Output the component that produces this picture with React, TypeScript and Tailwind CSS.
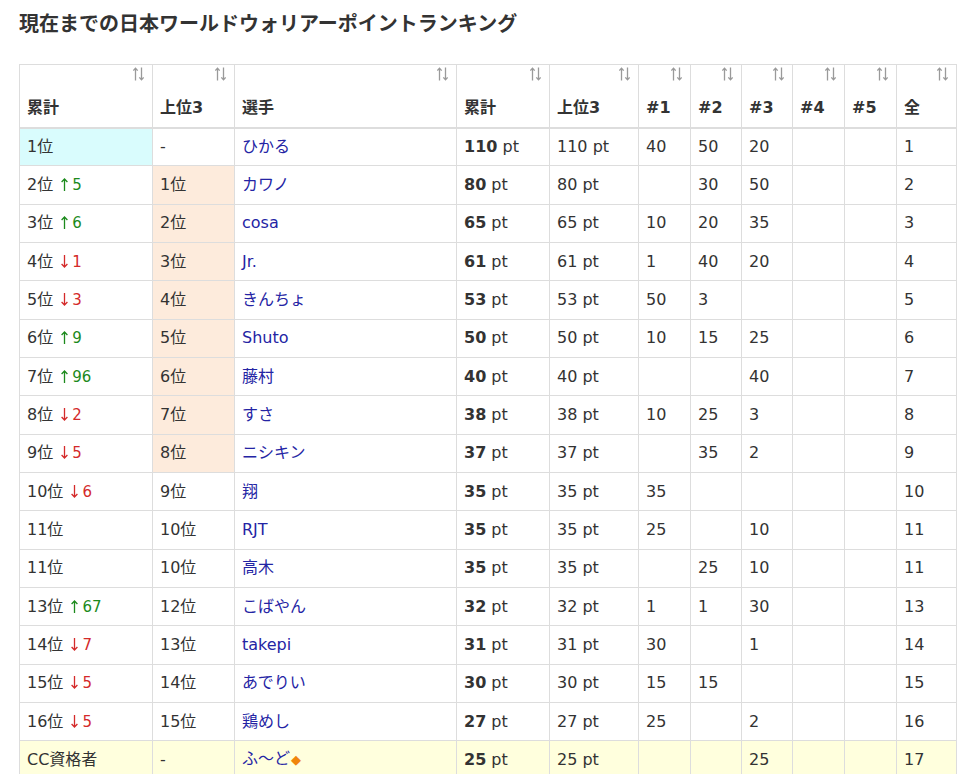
import React from 'react';

type Move = { dir: 'up' | 'down'; n: number } | null;

interface Row {
  total: string;
  move: Move;
  top3: string;
  name: string;
  pts: number;
  top3pts: number;
  r1?: number;
  r2?: number;
  r3?: number;
  r4?: number;
  r5?: number;
  all: number;
  diamond?: boolean;
}

const rows: Row[] = [
  { total: '1位', move: null, top3: '-', name: 'ひかる', pts: 110, top3pts: 110, r1: 40, r2: 50, r3: 20, all: 1 },
  { total: '2位', move: { dir: 'up', n: 5 }, top3: '1位', name: 'カワノ', pts: 80, top3pts: 80, r2: 30, r3: 50, all: 2 },
  { total: '3位', move: { dir: 'up', n: 6 }, top3: '2位', name: 'cosa', pts: 65, top3pts: 65, r1: 10, r2: 20, r3: 35, all: 3 },
  { total: '4位', move: { dir: 'down', n: 1 }, top3: '3位', name: 'Jr.', pts: 61, top3pts: 61, r1: 1, r2: 40, r3: 20, all: 4 },
  { total: '5位', move: { dir: 'down', n: 3 }, top3: '4位', name: 'きんちょ', pts: 53, top3pts: 53, r1: 50, r2: 3, all: 5 },
  { total: '6位', move: { dir: 'up', n: 9 }, top3: '5位', name: 'Shuto', pts: 50, top3pts: 50, r1: 10, r2: 15, r3: 25, all: 6 },
  { total: '7位', move: { dir: 'up', n: 96 }, top3: '6位', name: '藤村', pts: 40, top3pts: 40, r3: 40, all: 7 },
  { total: '8位', move: { dir: 'down', n: 2 }, top3: '7位', name: 'すさ', pts: 38, top3pts: 38, r1: 10, r2: 25, r3: 3, all: 8 },
  { total: '9位', move: { dir: 'down', n: 5 }, top3: '8位', name: 'ニシキン', pts: 37, top3pts: 37, r2: 35, r3: 2, all: 9 },
  { total: '10位', move: { dir: 'down', n: 6 }, top3: '9位', name: '翔', pts: 35, top3pts: 35, r1: 35, all: 10 },
  { total: '11位', move: null, top3: '10位', name: 'RJT', pts: 35, top3pts: 35, r1: 25, r3: 10, all: 11 },
  { total: '11位', move: null, top3: '10位', name: '高木', pts: 35, top3pts: 35, r2: 25, r3: 10, all: 11 },
  { total: '13位', move: { dir: 'up', n: 67 }, top3: '12位', name: 'こばやん', pts: 32, top3pts: 32, r1: 1, r2: 1, r3: 30, all: 13 },
  { total: '14位', move: { dir: 'down', n: 7 }, top3: '13位', name: 'takepi', pts: 31, top3pts: 31, r1: 30, r3: 1, all: 14 },
  { total: '15位', move: { dir: 'down', n: 5 }, top3: '14位', name: 'あでりい', pts: 30, top3pts: 30, r1: 15, r2: 15, all: 15 },
  { total: '16位', move: { dir: 'down', n: 5 }, top3: '15位', name: '鶏めし', pts: 27, top3pts: 27, r1: 25, r3: 2, all: 16 },
  { total: 'CC資格者', move: null, top3: '-', name: 'ふ～ど', pts: 25, top3pts: 25, r3: 25, all: 17, diamond: true },
];

const headers = [
  { label: '累計', w: 'w-[133px]' },
  { label: '上位3', w: 'w-[82px]' },
  { label: '選手', w: 'w-[222px]' },
  { label: '累計', w: 'w-[93px]' },
  { label: '上位3', w: 'w-[89px]' },
  { label: '#1', w: 'w-[52px]' },
  { label: '#2', w: 'w-[51px]' },
  { label: '#3', w: 'w-[51px]' },
  { label: '#4', w: 'w-[52px]' },
  { label: '#5', w: 'w-[52px]' },
  { label: '全', w: 'w-[60px]' },
];

const td = 'border border-[#dddddd] px-[7px] py-0 align-middle';

function SortIcon() {
  return (
    <svg width="11" height="14" viewBox="0 0 11 14" fill="none" stroke="#9a9a9a" strokeWidth="1.3">
      <path d="M2.5 13.5V1M0.3 3.6L2.5 1.2L4.7 3.6" />
      <path d="M8.5 0.5V13M6.3 10.4L8.5 12.8L10.7 10.4" />
    </svg>
  );
}

function MoveArrow({ dir }: { dir: 'up' | 'down' }) {
  return (
    <svg width="7" height="13" viewBox="0 0 7 13" fill="none" stroke="currentColor" strokeWidth="1.3" className="mr-[4px] inline-block align-[-1px]">
      {dir === 'up' ? (
        <path d="M3.5 13V1M0.6 4L3.5 1L6.4 4" />
      ) : (
        <path d="M3.5 0V12M0.6 9L3.5 12L6.4 9" />
      )}
    </svg>
  );
}

export default function App() {
  return (
    <div className="min-h-screen bg-white pl-[19px] pt-[10px] text-[#333333] font-['DejaVu_Sans','Noto_Sans_CJK_JP',sans-serif]">
      <h2 className="text-[20px] font-bold leading-[26px] font-['Noto_Sans_CJK_JP',sans-serif]">現在までの日本ワールドウォリアーポイントランキング</h2>
      <table className="mt-[28px] w-[937px] table-fixed border-collapse text-[16px]">
        <thead>
          <tr className="h-[63px]">
            {headers.map((h, i) => (
              <th key={i} className={`${h.w} border border-b-2 border-[#dddddd] pl-[7px] pr-[8px] pb-[8px] pt-[2px] text-left align-top font-bold`}>
                <div className="flex h-[16px] justify-end">
                  <SortIcon />
                </div>
                <div className="mt-[16px] leading-[18px]">{h.label}</div>
              </th>
            ))}
          </tr>
        </thead>
        <tbody>
          {rows.map((r, i) => {
            const rowBg = r.diamond ? 'bg-[#ffffdd]' : '';
            return (
              <tr key={i} className={`h-[38.33px] leading-[24px] ${rowBg}`}>
                <td className={`${td} ${i === 0 ? 'bg-[#d9fcfd]' : ''}`}>
                  {r.total}
                  {r.move && (
                    <span className={`ml-[8px] text-[15px] ${r.move.dir === 'up' ? 'text-[#1c8a1c]' : 'text-[#d42a2a]'}`}>
                      <MoveArrow dir={r.move.dir} />
                      {r.move.n}
                    </span>
                  )}
                </td>
                <td className={`${td} ${i >= 1 && i <= 8 ? 'bg-[#fdebdc]' : ''}`}>{r.top3}</td>
                <td className={`${td} text-[#2424a4]`}>
                  {r.name}
                  {r.diamond && <span className="ml-[1px] text-[13px] text-[#f0850a]">◆</span>}
                </td>
                <td className={td}>
                  <b>{r.pts}</b> pt
                </td>
                <td className={td}>{r.top3pts} pt</td>
                <td className={td}>{r.r1 ?? ''}</td>
                <td className={td}>{r.r2 ?? ''}</td>
                <td className={td}>{r.r3 ?? ''}</td>
                <td className={td}>{r.r4 ?? ''}</td>
                <td className={td}>{r.r5 ?? ''}</td>
                <td className={td}>{r.all}</td>
              </tr>
            );
          })}
        </tbody>
      </table>
    </div>
  );
}
